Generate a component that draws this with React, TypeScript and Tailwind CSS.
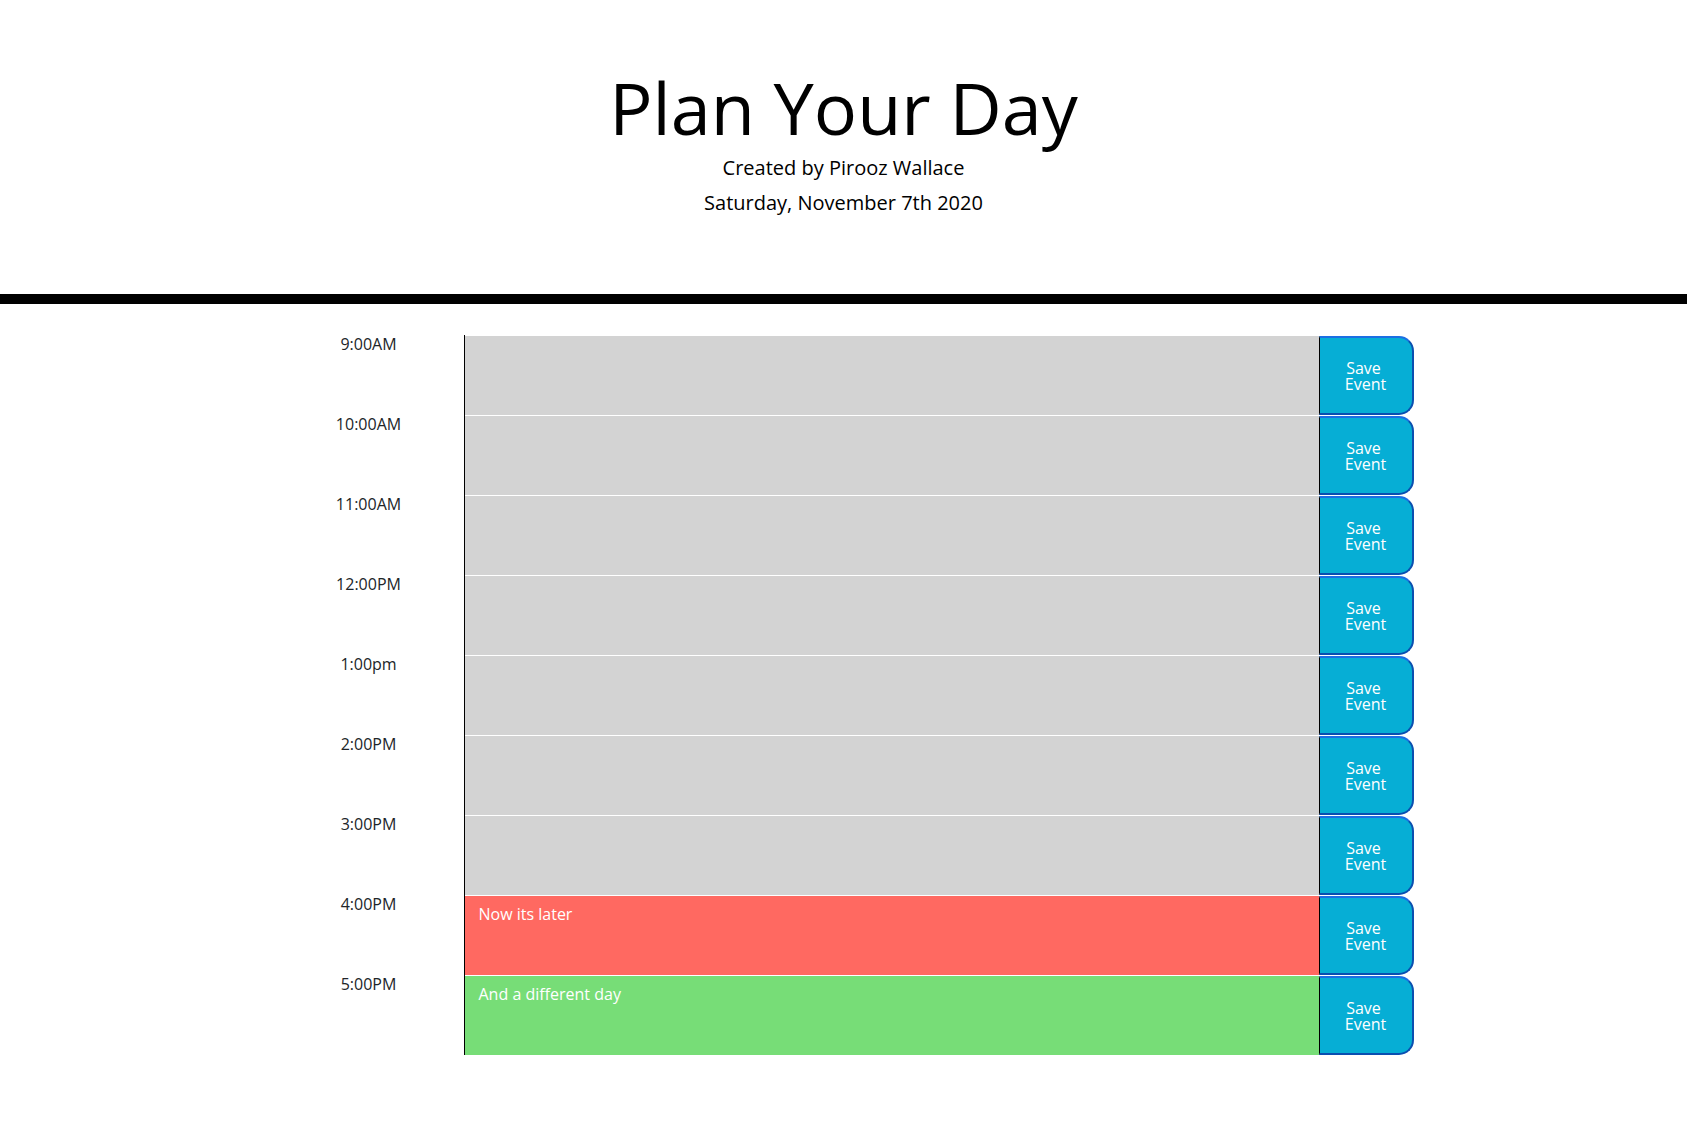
import React from "react";

const rows: { hour: string; cls: string; text: string }[] = [
  { hour: "9:00AM", cls: "bg-[#d3d3d3]", text: "" },
  { hour: "10:00AM", cls: "bg-[#d3d3d3]", text: "" },
  { hour: "11:00AM", cls: "bg-[#d3d3d3]", text: "" },
  { hour: "12:00PM", cls: "bg-[#d3d3d3]", text: "" },
  { hour: "1:00pm", cls: "bg-[#d3d3d3]", text: "" },
  { hour: "2:00PM", cls: "bg-[#d3d3d3]", text: "" },
  { hour: "3:00PM", cls: "bg-[#d3d3d3]", text: "" },
  { hour: "4:00PM", cls: "bg-[#ff6961]", text: "Now its later" },
  { hour: "5:00PM", cls: "bg-[#77dd77]", text: "And a different day" },
];

export default function App() {
  return (
    <div className="min-h-[1132px] w-full bg-white font-['Open_Sans',sans-serif]">
      <header className="border-b-[10px] border-black pt-[64px] pb-[74px] text-center text-black">
        <h1 className="text-[72px] font-normal leading-[86px]">Plan Your Day</h1>
        <p className="text-[20px] font-normal leading-[35px]">Created by Pirooz Wallace</p>
        <p className="text-[20px] font-normal leading-[35px]">Saturday, November 7th 2020</p>
      </header>
      <div className="mx-auto mt-[31px] w-[1140px]">
        {rows.map((r) => (
          <div key={r.hour} className="flex h-[80px]">
            <div className="w-[190px] pt-0 text-center text-[16px] leading-[19px] text-[#212529]">
              {r.hour}
            </div>
            <div className="w-[855px] border-l border-black">
              <div className={`h-full border-t border-white ${r.cls} px-[14px] pt-[6px] text-[16px] leading-6 text-white`}>
                {r.text}
              </div>
            </div>
            <div className="w-[95px] pt-px">
              <button className="flex h-full w-full flex-col items-center justify-center rounded-r-[15px] border-t-2 border-r-2 border-b-2 border-l border-t-[#1b6fe3] border-r-[#0b4fb0] border-b-[#0b4fb0] border-l-black bg-[#06aed5] text-[16px] leading-[16px] text-white">
                <span className="pr-[4px]">Save</span>
                <span>Event</span>
              </button>
            </div>
          </div>
        ))}
      </div>
    </div>
  );
}
